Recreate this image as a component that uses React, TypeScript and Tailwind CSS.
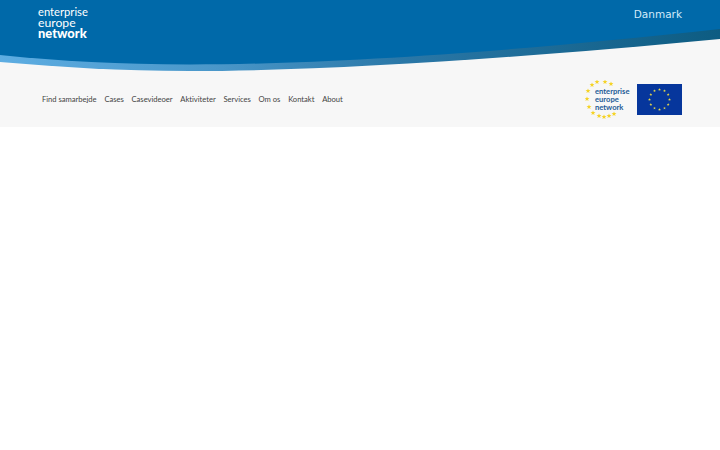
const navItems = ["Find samarbejde", "Cases", "Casevideoer", "Aktiviteter", "Services", "Om os", "Kontakt", "About"]

const flagStars = Array.from({ length: 12 }, (_, i) => {
  const a = (i * Math.PI) / 6
  return { x: 22.5 + 10 * Math.sin(a), y: 15.5 - 10 * Math.cos(a) }
})

const logoStars = [
  [12, 2], [20, 2], [26, 4], [7, 5], [3, 11], [2, 19], [4, 27], [8, 33], [14, 36], [19, 37], [24, 36], [29, 34],
]

function Star({ x, y, r, fill }: { x: number; y: number; r: number; fill: string }) {
  const points = Array.from({ length: 10 }, (_, i) => {
    const a = (i * Math.PI) / 5 - Math.PI / 2
    const d = i % 2 === 0 ? r : r * 0.42
    return `${x + d * Math.cos(a)},${y + d * Math.sin(a)}`
  }).join(" ")
  return <polygon points={points} fill={fill} />
}

function HeaderWave() {
  return (
    <svg className="absolute top-0 left-0 w-full h-[72px]" viewBox="0 0 720 72" preserveAspectRatio="none">
      <defs>
        <linearGradient id="band" x1="0" x2="1" y1="0" y2="0">
          <stop offset="0" stopColor="#5dade2" />
          <stop offset="0.3" stopColor="#4a97c9" />
          <stop offset="0.55" stopColor="#2b78a8" />
          <stop offset="1" stopColor="#0d5c82" />
        </linearGradient>
      </defs>
      <path d="M0 62 C60 67 120 71 190 71 C330 71 520 58 720 39 L720 0 L0 0 Z" fill="url(#band)" />
      <path d="M0 55 C60 61 120 64.5 190 64.5 C330 64.5 520 51 720 29 L720 0 L0 0 Z" fill="#0069a9" />
    </svg>
  )
}

export default function App() {
  return (
    <div className="min-h-[450px] bg-white font-['Lato',sans-serif]">
      <header className="relative h-[127px] bg-[#f7f7f7] overflow-hidden">
        <HeaderWave />
        <div className="relative flex justify-between pl-[38px] pr-[38px] h-[64px]">
          <div className="pt-[6px] text-white leading-[11px]">
            <div className="text-[11.2px]">enterprise</div>
            <div className="text-[12.2px]">europe</div>
            <div className="text-[12.9px] font-black">network</div>
          </div>
          <div className="pt-[6px] font-['DejaVu_Sans',sans-serif] text-[10.5px] leading-[16px] text-[#d3ebfa]">
            Danmark
          </div>
        </div>
        <div className="relative flex items-center justify-between pl-[42px] pr-[38px] pt-[16px]">
          <nav className="flex gap-[7.75px] pb-[2px] text-[7.65px] leading-[12px] tracking-[-0.03px] text-[#444444]">
            {navItems.map((item) => (
              <span key={item}>{item}</span>
            ))}
          </nav>
          <div className="flex items-center gap-[7px]">
            <div className="relative w-[45px] h-[39px]">
              <svg className="absolute top-0 left-0" width="34" height="40" viewBox="0 0 34 40">
                {logoStars.map(([x, y]) => (
                  <Star key={`${x}-${y}`} x={x} y={y} r={2.6} fill="#f5d327" />
                ))}
              </svg>
              <div className="absolute top-[7px] left-[10px] text-[7.6px] leading-[8px] text-[#1c5a96] font-bold">
                <div>enterprise</div>
                <div>europe</div>
                <div>network</div>
              </div>
            </div>
            <svg width="45" height="31" viewBox="0 0 45 31">
              <rect width="45" height="31" fill="#06369c" />
              {flagStars.map((s) => (
                <Star key={`${s.x}-${s.y}`} x={s.x} y={s.y} r={1.5} fill="#e8d94a" />
              ))}
            </svg>
          </div>
        </div>
      </header>
    </div>
  )
}
